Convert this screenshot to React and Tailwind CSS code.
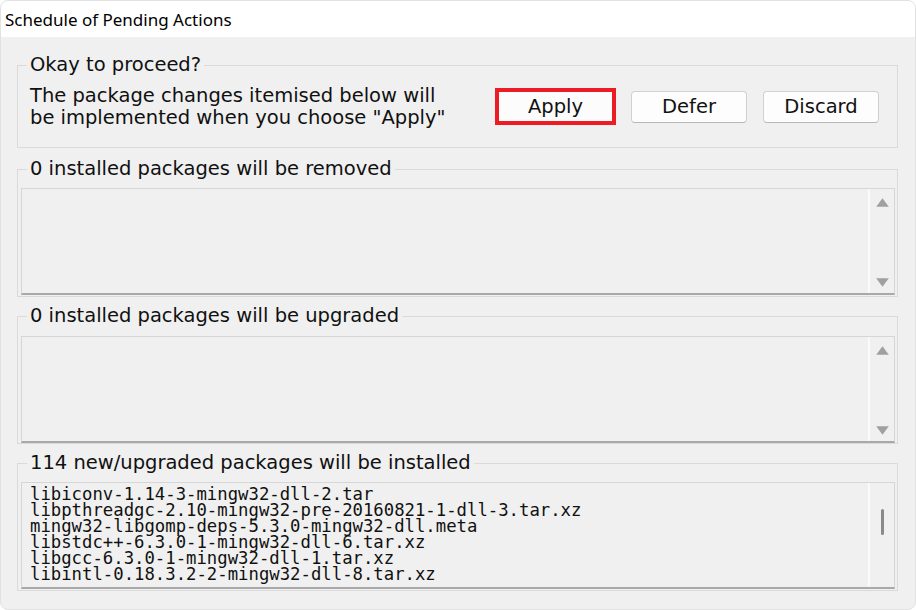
import React from 'react';

const sans = { fontFamily: '"DejaVu Sans", Verdana, sans-serif' };

const packages = [
  'libiconv-1.14-3-mingw32-dll-2.tar',
  'libpthreadgc-2.10-mingw32-pre-20160821-1-dll-3.tar.xz',
  'mingw32-libgomp-deps-5.3.0-mingw32-dll.meta',
  'libstdc++-6.3.0-1-mingw32-dll-6.tar.xz',
  'libgcc-6.3.0-1-mingw32-dll-1.tar.xz',
  'libintl-0.18.3.2-2-mingw32-dll-8.tar.xz',
];

const ArrowUp = () => (
  <svg width="13" height="9" viewBox="0 0 13 9">
    <path d="M6.5 0.3 L12.8 8.7 L0.2 8.7 Z" fill="#a0a0a0" />
  </svg>
);

const ArrowDown = () => (
  <svg width="13" height="9" viewBox="0 0 13 9">
    <path d="M0.2 0.3 L12.8 0.3 L6.5 8.7 Z" fill="#a0a0a0" />
  </svg>
);

const Group = ({ title, className = '', children }) => (
  <fieldset className={`border border-[#dadada] ${className}`}>
    <legend className="ml-[9px] px-[3px] text-[19.5px] leading-[20px] text-[#111]" style={sans}>
      {title}
    </legend>
    {children}
  </fieldset>
);

const ListBox = ({ children, scroll = 'arrows' }) => (
  <div className="flex h-[107px] border-t border-l border-r border-[#d6d6d6] border-b-2 border-b-[#a9a9a9] bg-[#f0f0f0]">
    <div className="flex-1 overflow-hidden">{children}</div>
    <div className="w-[26px] border-l-2 border-[#fafafa] flex flex-col items-center">
      {scroll === 'arrows' ? (
        <>
          <div className="mt-[9px]">
            <ArrowUp />
          </div>
          <div className="flex-1" />
          <div className="mb-[6px]">
            <ArrowDown />
          </div>
        </>
      ) : (
        <div className="mt-[26px] w-[3px] h-[26px] rounded-full bg-[#8a8a8a]" />
      )}
    </div>
  </div>
);

const Button = ({ children }) => (
  <button
    className="w-[116px] h-[32px] rounded-[4px] border border-[#d0d0d0] border-b-[#b8b8b8] bg-[#fdfdfd] text-[19.5px] leading-[20px] text-[#111]"
    style={sans}
  >
    {children}
  </button>
);

export default function App() {
  return (
    <div className="w-[916px] h-[610px] bg-white">
      <div className="w-full h-full rounded-[8px] border border-[#e2e2e2] overflow-hidden flex flex-col bg-[#f0f0f0]">
        {/* title bar */}
        <div
          className="h-[36px] bg-white pl-[4px] pt-[1px] text-[17px] leading-[35px] text-black"
          style={{ fontFamily: '"Noto Sans", "Open Sans", sans-serif' }}
        >
          Schedule of Pending Actions
        </div>

        <div className="flex-1 pl-[16px] pr-[17px]">
          <Group title="Okay to proceed?" className="mt-[18px]">
            <div className="h-[72px] flex justify-between pl-[12px] pr-[18px]">
              <p className="pt-[10px] text-[19.5px] leading-[22px] text-[#111]" style={sans}>
                The package changes itemised below will
                <br />
                be implemented when you choose "Apply"
              </p>
              <div className="pt-[13px] flex items-center self-start">
                <div
                  className="w-[121px] h-[37px] mr-[15px] border-[4px] border-[#ed1c24] bg-[#fcfcfc] flex items-center justify-center text-[19.5px] leading-[20px] text-[#111]"
                  style={sans}
                >
                  Apply
                </div>
                <Button>Defer</Button>
                <div className="ml-[16px]">
                  <Button>Discard</Button>
                </div>
              </div>
            </div>
          </Group>

          <Group title="0 installed packages will be removed" className="mt-[11px]">
            <div className="pt-[9px] pb-[1px] pl-[3px] pr-[2px]">
              <ListBox />
            </div>
          </Group>

          <Group title="0 installed packages will be upgraded" className="mt-[9px]">
            <div className="pt-[10px] pl-[3px] pr-[2px]">
              <ListBox />
            </div>
          </Group>

          <Group title="114 new/upgraded packages will be installed" className="mt-[9px]">
            <div className="pt-[9px] pb-[1px] pl-[3px] pr-[2px]">
              <ListBox scroll="thumb">
                <div
                  className="pt-[3px] pl-[8px] text-[17.3px] leading-[16px] text-[#111] whitespace-pre"
                  style={{ fontFamily: '"DejaVu Sans Mono", "Liberation Mono", monospace' }}
                >
                  {packages.map((p) => (
                    <div key={p} className="h-[16px]">
                      {p}
                    </div>
                  ))}
                </div>
              </ListBox>
            </div>
          </Group>
        </div>
      </div>
    </div>
  );
}
